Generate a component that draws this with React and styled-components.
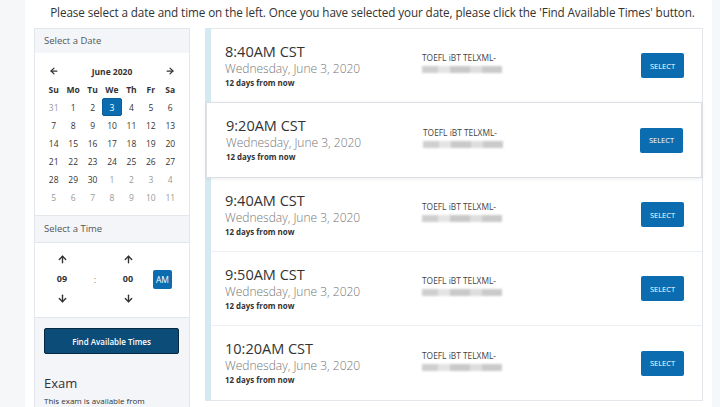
import React from 'react'
import styled, { createGlobalStyle, css } from 'styled-components'
import { ArrowLeft, ArrowRight, ArrowUp, ArrowDown } from 'lucide-react'

const colors = {
  gutter: '#f6f7f9',
  line: '#e3e6ea',
  band: '#f4f5f8',
  text: '#333',
  muted: '#767676',
  blue: '#0b6db0',
  navy: '#0b4c78',
  stripe: '#d5e9f2',
}

const weeks = [
  ['31', '1', '2', '3', '4', '5', '6'],
  ['7', '8', '9', '10', '11', '12', '13'],
  ['14', '15', '16', '17', '18', '19', '20'],
  ['21', '22', '23', '24', '25', '26', '27'],
  ['28', '29', '30', '1', '2', '3', '4'],
  ['5', '6', '7', '8', '9', '10', '11'],
]

const slots = ['8:40AM CST', '9:20AM CST', '9:40AM CST', '9:50AM CST', '10:20AM CST']

const App = () => (
  <>
    <GlobalStyle />
    <Page>
      <Intro>
        Please select a date and time on the left. Once you have selected your date, please click
        the 'Find Available Times' button.
      </Intro>
      <Main>
        <Sidebar>
          <SectionTitle>Select a Date</SectionTitle>
          <Calendar>
            <Cell><ArrowLeft size={10} strokeWidth={3} /></Cell>
            <MonthLabel>June 2020</MonthLabel>
            <Cell><ArrowRight size={10} strokeWidth={3} /></Cell>
            {['Su', 'Mo', 'Tu', 'We', 'Th', 'Fr', 'Sa'].map((d) => (
              <Cell key={d} head>{d}</Cell>
            ))}
            {weeks.map((week, w) =>
              week.map((d, i) => {
                const outside = (w === 0 && i === 0) || (w === 4 && i > 2) || w === 5
                return (
                  <Cell key={w + '-' + i} outside={outside} selected={w === 0 && i === 3}>
                    {d}
                  </Cell>
                )
              })
            )}
          </Calendar>
          <SectionTitle bordered>Select a Time</SectionTitle>
          <TimePicker>
            <TimeColumn>
              <ArrowUp size={11} strokeWidth={3} />
              <TimeValue>09</TimeValue>
              <ArrowDown size={11} strokeWidth={3} />
            </TimeColumn>
            <Colon>:</Colon>
            <TimeColumn>
              <ArrowUp size={11} strokeWidth={3} />
              <TimeValue>00</TimeValue>
              <ArrowDown size={11} strokeWidth={3} />
            </TimeColumn>
            <Meridiem>AM</Meridiem>
          </TimePicker>
          <Footer>
            <FindButton>Find Available Times</FindButton>
            <ExamTitle>Exam</ExamTitle>
            <ExamText>This exam is available from</ExamText>
          </Footer>
        </Sidebar>
        <List>
          {slots.map((t, i) => (
            <Slot key={t} active={i === 1}>
              <When>
                <Time>{t}</Time>
                <Day>Wednesday, June 3, 2020</Day>
                <Ago>12 days from now</Ago>
              </When>
              <Course>
                <CourseName>TOEFL iBT TELXML-</CourseName>
                <Blurred />
              </Course>
              <SelectButton>SELECT</SelectButton>
            </Slot>
          ))}
        </List>
      </Main>
    </Page>
  </>
)

export default App

// ------- STYLES -------

const GlobalStyle = createGlobalStyle`
  html, body {
    margin: 0;
    padding: 0;
    background: ${colors.gutter};
    font-family: "Open Sans", "Noto Sans", sans-serif;
    color: ${colors.text};
  }
`

const Page = styled.div`
  margin: 0 8px 0 25px;
  background: #fff;
  height: 407px;
  overflow: hidden;
`

const Intro = styled.div`
  text-align: center;
  font-size: 11.7px;
  letter-spacing: -0.1px;
  line-height: 14px;
  padding: 5px 0 9px 8px;
  color: #333;
`

const Main = styled.div`
  display: flex;
  align-items: flex-start;
  gap: 15px;
  padding-left: 9px;
`

// Sidebar
const Sidebar = styled.div`
  width: 156px;
  flex: none;
  border: 1px solid ${colors.line};
  box-sizing: border-box;
`

const SectionTitle = styled.div`
  background: ${colors.band};
  font-size: 9.5px;
  color: #555;
  height: 24px;
  line-height: 24px;
  padding-left: 9px;
  ${(p) =>
    p.bordered &&
    css`
      border-top: 1px solid ${colors.line};
      height: 26px;
      line-height: 25px;
    `}
`

const Calendar = styled.div`
  display: grid;
  grid-template-columns: repeat(7, 1fr);
  grid-auto-rows: 18px;
  padding: 9px 9px 9px 9px;
`

const Cell = styled.div`
  display: flex;
  align-items: center;
  justify-content: center;
  font-size: 8.5px;
  color: ${(p) => (p.outside ? '#9a9a9a' : '#333')};
  font-weight: ${(p) => (p.head ? 700 : 400)};
  ${(p) =>
    p.selected &&
    css`
      background: ${colors.blue};
      color: #fff;
      border-radius: 2px;
      border: 1px solid #0a5d96;
    `}
`

const MonthLabel = styled.div`
  grid-column: span 5;
  display: flex;
  align-items: center;
  justify-content: center;
  font-size: 8.5px;
  font-weight: 700;
`

const TimePicker = styled.div`
  display: flex;
  align-items: center;
  padding: 11px 0 13px 20px;
  border-top: 1px solid ${colors.line};
`

const TimeColumn = styled.div`
  display: flex;
  flex-direction: column;
  align-items: center;
  gap: 8px;
  width: 14px;
`

const TimeValue = styled.div`
  font-size: 9px;
  font-weight: 700;
  line-height: 12px;
`

const Colon = styled.div`
  width: 52px;
  text-align: center;
  font-size: 9px;
  color: #777;
`

const Meridiem = styled.div`
  margin-left: 18px;
  background: ${colors.blue};
  color: #fff;
  font-size: 8.5px;
  width: 19px;
  height: 19px;
  border-radius: 2px;
  display: flex;
  align-items: center;
  justify-content: center;
`

const Footer = styled.div`
  background: ${colors.band};
  border-top: 1px solid ${colors.line};
  padding: 10px 10px 20px 9px;
`

const FindButton = styled.button`
  display: block;
  width: 135px;
  height: 26px;
  background: ${colors.navy};
  border: 1px solid #08283e;
  border-radius: 2px;
  color: #fff;
  font-family: inherit;
  font-size: 8px;
  font-weight: 600;
  cursor: pointer;
`

const ExamTitle = styled.div`
  font-size: 13px;
  margin-top: 20px;
  color: #333;
`

const ExamText = styled.div`
  font-size: 8px;
  margin-top: 3px;
`

// List
const List = styled.div`
  width: 498px;
  flex: none;
  border: 1px solid ${colors.line};
  border-left: 6px solid ${colors.stripe};
  box-sizing: border-box;
`

const Slot = styled.div`
  display: flex;
  align-items: center;
  box-sizing: border-box;
  height: 74px;
  padding: 0 18px 0 14px;
  border-bottom: 1px solid #edf0f3;
  background: #fff;
  &:last-child {
    border-bottom: none;
  }
  ${(p) =>
    p.active &&
    css`
      position: relative;
      margin-left: -5px;
      margin-top: -1px;
      padding-left: 19px;
      border: 1px solid #dcdfe3;
      box-shadow: 0 1px 4px rgba(0, 0, 0, 0.08);
      height: 76px;
    `}
`

const When = styled.div`
  width: 197px;
  flex: none;
`

const Time = styled.div`
  font-size: 14.5px;
  font-weight: 500;
  line-height: 18px;
  color: #333;
`

const Day = styled.div`
  font-size: 12px;
  line-height: 16px;
  color: ${colors.muted};
  font-weight: 300;
`

const Ago = styled.div`
  font-size: 7.9px;
  font-weight: 700;
  line-height: 12px;
  color: #333;
`

const Course = styled.div`
  flex: 1;
  display: flex;
  flex-direction: column;
  gap: 3px;
  margin-top: -6px;
`

const CourseName = styled.div`
  font-size: 8.4px;
  color: #444;
`

const Blurred = styled.div`
  width: 80px;
  height: 7px;
  background: linear-gradient(90deg, #cfcfcf 0 20%, #e4e4e4 20% 35%, #c9c9c9 35% 60%, #dedede 60% 75%, #cacaca 75%);
  filter: blur(1.2px);
`

const SelectButton = styled.button`
  flex: none;
  width: 43px;
  height: 25px;
  background: ${colors.blue};
  border: none;
  border-radius: 2px;
  color: #fff;
  font-family: inherit;
  font-size: 7.5px;
  cursor: pointer;
`
